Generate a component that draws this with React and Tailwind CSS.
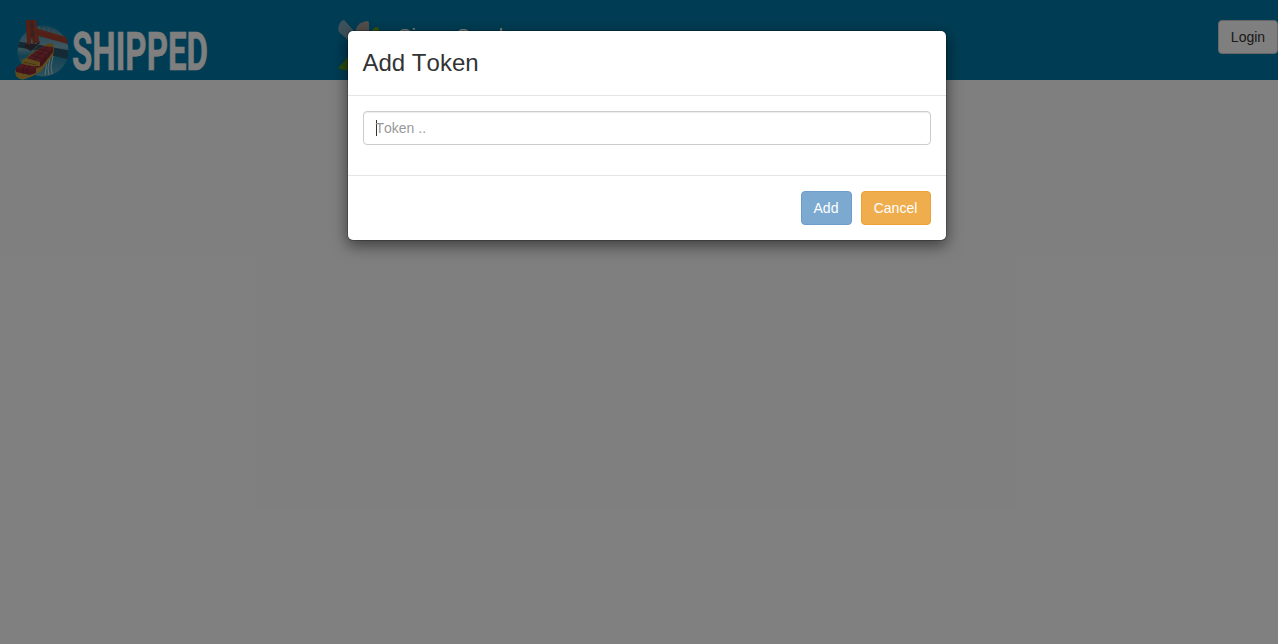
function ShipIcon() {
  return (
    <svg width="56" height="61" viewBox="0 0 56 61" className="block shrink-0">
      <defs>
        <linearGradient id="sky" x1="0" y1="0" x2="0" y2="1">
          <stop offset="0" stopColor="#2e86a4" />
          <stop offset="0.42" stopColor="#82aebf" />
          <stop offset="0.6" stopColor="#2785a5" />
          <stop offset="1" stopColor="#5ba5bd" />
        </linearGradient>
        <clipPath id="disc">
          <circle cx="28" cy="32" r="25.500" />
        </clipPath>
      </defs>
      <circle cx="28" cy="32" r="25.500" fill="url(#sky)" />
      <g clipPath="url(#disc)">
        <path d="M0 22 L20 25 L36 28 L56 32 V41 L36 36 L20 31 L0 28Z" fill="#285568" />
        <path d="M20 9 Q34 8 54 21" stroke="#7c8e95" strokeWidth="0.700" fill="none" />
        <path d="M24 7v6M29 8v6M34 9v6M39 11v6M44 14v6" stroke="#8b989c" strokeWidth="0.9" />
        <path d="M32 42l-2 14M35 39l-2 10 1 7M38 37l-2 10 1 8" stroke="#b9d6df" strokeWidth="1.100" fill="none" />
      </g>
      <path d="M8 27l5-2 8 0 4-3 -1 4-5 3-3 3-4-2z" fill="#3c3b45" />
      <path d="M19 30l6-6M18 32l3-1" stroke="#887b7c" strokeWidth="0.900" />
      <path d="M20 9 L51 18 L53 25 L20 16Z" fill="#a5402d" />
      <path d="M21 10 L51 19" stroke="#b04b37" strokeWidth="0.800" />
      <path d="M11 1 L21 1 L24 23 L18 25 L17 18 L15 26 L12 25Z" fill="#963c2d" />
      <path d="M11 1h3.500l1.500 24h-3.500zM18 1h3l3 22h-4z" fill="#a8432f" />
      <path d="M15.500 4h3v5h-3zM16.500 12h3v5h-3z" fill="#65434a" />
      <path d="M0 52 L8 43 L15 35 L30 26 Q36 23 38 25 Q40 30 38 36 L26 52 Q19 57 8 60.500 Q0 60 0 52Z" fill="#b38b32" />
      <path d="M1 53 Q12 56 25 49 L38 32 L38 36 L26 52 Q19 57 8 60.500 Q0 60 1 53Z" fill="#c0993a" />
      <path d="M12 40 L27 28 L38 28 L38 33 L27 47 L22 49Z" fill="#842d38" />
      <path d="M12 39 L28 27 L38 28 L36 32 L24 43Z" fill="#97363f" />
      <path d="M16 36l12 4M20 33l12 3M24 30l12 3M18 41L33 28M27 41v5M30 38v5M34 34v4" stroke="#6b222e" strokeWidth="0.700" />
      <path d="M7 41l4-2 14 4v4l-6 0-12-4z" fill="#bd9639" />
      <path d="M9 43l12 3" stroke="#916722" strokeWidth="1" />
      <path d="M1 49l5-4 15 3v6l-6 2-14-3z" fill="#882c38" />
      <path d="M1 49l5-4 15 3-6 2z" fill="#9a3540" />
      <path d="M10 46l-2 4v5M16 47l-4 3v5" stroke="#681c29" strokeWidth="0.800" fill="none" />
    </svg>
  );
}

function SparkIcon() {
  return (
    <svg width="50" height="52" viewBox="0 0 50 52" className="block shrink-0">
      <path d="M0 9 Q1 3 4 0.500 Q6 -1 8 2 L17 12 V22 H12 L1 12Z" fill="#7aa5b8" />
      <path d="M18 9 Q20 2 29 1 Q31 1 31 3 V19 H18Z" fill="#a49f9d" />
      <path d="M33 12 Q36 7 39 7 Q42 8 41 12 L40 22 H33Z" fill="#6aa621" />
      <path d="M0 35 V29 Q2 22 12 23 L21 28 V35Z" fill="#0074ad" />
      <path d="M0 48 L12 35 H19 V51 H12 Q4 50 0 48Z" fill="#5b9820" />
    </svg>
  );
}

export default function App() {
  return (
    <div className="relative h-[644px] overflow-hidden bg-white font-['Liberation_Sans',sans-serif] text-sm leading-5 text-[#333] [font-kerning:none]">
      <header className="flex h-20 items-start bg-[#007aa9]">
        <div className="flex w-[338px] pl-[15px] pt-[19px]">
          <ShipIcon />
          <svg width="140" height="60" viewBox="0 0 140 60" className="block overflow-visible">
            <text x="1" y="50.5" textLength="136" lengthAdjust="spacingAndGlyphs" fill="#fff" stroke="#fff" strokeWidth="0.500" className="font-['Roboto',sans-serif] text-[54px] font-bold">SHIPPED</text>
          </svg>
        </div>
        <div className="flex flex-1 pt-5">
          <SparkIcon />
          <span className="ml-[9px] mt-1 text-[20px] leading-6 text-white [word-spacing:4px]">Cisco Spark</span>
        </div>
        <button className="mt-5 h-[34px] w-[60px] rounded border border-[#ccc] bg-white text-sm text-[#333]">Login</button>
      </header>
      <div className="absolute inset-0 flex items-start justify-center bg-black/50 pl-[15px] pt-[30px]">
        <section className="w-[600px] rounded-md border border-black/20 bg-white bg-clip-padding shadow-[0_5px_15px_rgba(0,0,0,0.5)]">
          <div className="h-[65px] border-b border-[#e5e5e5] p-[15px]">
            <h4 className="text-2xl leading-[34px]">Add Token</h4>
          </div>
          <div className="h-[79px] px-[15px] pt-[15px]">
            <div className="flex h-[34px] items-center rounded border border-[#ccc] px-3 text-[#999] shadow-[inset_0_1px_1px_rgba(0,0,0,0.075)]">
              <span className="h-4 w-px bg-[#333]" />
              <span className="-ml-px">Token ..</span>
            </div>
          </div>
          <div className="flex h-[65px] justify-end gap-[9px] border-t border-[#e5e5e5] px-[15px] pt-[15px]">
            <button className="h-[34px] w-[51px] rounded border border-[#6d9dca] bg-[#7ca9d0] text-white">Add</button>
            <button className="h-[34px] w-[70px] rounded border border-[#eea236] bg-[#f0ad4e] text-white">Cancel</button>
          </div>
        </section>
      </div>
    </div>
  );
}
